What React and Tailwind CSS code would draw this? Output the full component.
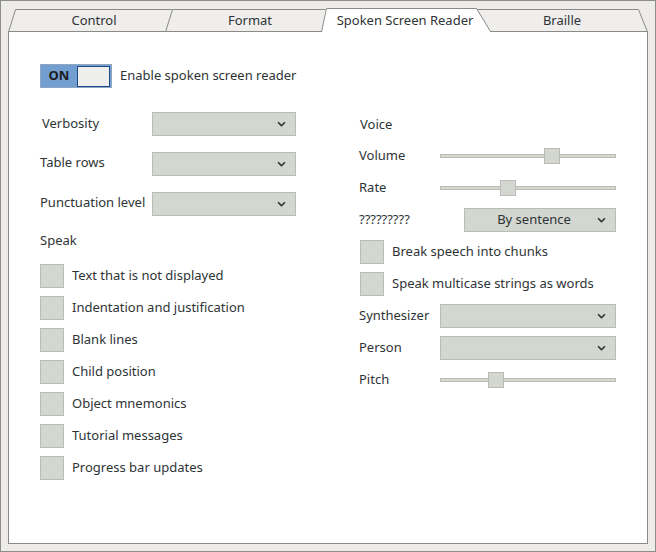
import React from 'react';

const font = { fontFamily: '"Noto Sans", "DejaVu Sans", sans-serif' };

function Chevron() {
  return (
    <svg width="9" height="6" viewBox="0 0 9 6" className="shrink-0">
      <path d="M1 1.2 L4.5 4.6 L8 1.2" fill="none" stroke="#2e3436" strokeWidth="1.6" />
    </svg>
  );
}

function Combo({ width, text }) {
  return (
    <div
      className={`${width} h-6 bg-[#d3d7cf] border border-[#babdb6] flex items-center pr-[9px]`}
    >
      <span className="flex-1 text-center pl-[6px] text-[13px] text-[#2e3436]">{text}</span>
      <Chevron />
    </div>
  );
}

function Checkbox({ label }) {
  return (
    <div className="h-6 flex items-center gap-2">
      <div className="w-6 h-6 bg-[#d3d7cf] border border-[#babdb6]" />
      <span className="text-[13px] text-[#2e3436]">{label}</span>
    </div>
  );
}

function Slider({ value }) {
  return (
    <div className="relative w-[176px] h-6 flex items-center">
      <div className="w-full h-[4px] bg-[#d3d7cf] border border-[#babdb6]" />
      <div
        className="absolute top-1 w-4 h-4 bg-[#d3d7cf] border border-[#babdb6]"
        style={{ left: Math.round(value * 160) }}
      />
    </div>
  );
}

function Tab({ width, z, pad, points, line, active, children }) {
  return (
    <div className={`relative ${width} ${z} h-6 flex items-center justify-center ${pad}`}>
      <svg className="absolute left-0 top-0 overflow-visible" width="10" height="24">
        <polygon points={points} fill={active ? '#ffffff' : '#efeeed'} />
        <polyline points={line} fill="none" stroke="#8a8a86" strokeWidth="1" />
      </svg>
      <span className="relative text-[13px] text-[#2e3436] pt-px">{children}</span>
    </div>
  );
}

export default function App() {
  return (
    <div style={font} className="w-[656px] h-[552px] bg-[#edeceb] border border-[#8d8d89] px-[7px] pt-[7px]">
      <div className="flex h-6">
        <Tab
          width="w-[157px]"
          z="z-0"
          pad="pl-[15px]"
          points="0,24 7,1 172,1 179,24"
          line="0.5,24 7.5,1.5 171.5,1.5"
        >
          Control
        </Tab>
        <Tab
          width="w-[156px]"
          z="z-[1]"
          pad="pl-[14px]"
          points="0,24 7,1 170,1 177,24"
          line="0.5,24 7.5,1.5 169.5,1.5"
        >
          Format
        </Tab>
        <Tab
          width="w-[170px]"
          z="z-[3]"
          pad="pr-[2px]"
          points="0,25 5,0 155,0 170,25"
          line="0.5,24 5.5,0.5 155.5,0.5 169.5,23.5"
          active
        >
          Spoken Screen Reader
        </Tab>
        <Tab
          width="w-[157px]"
          z="z-[2]"
          pad="pr-[15px]"
          points="-20,24 -14,1 148,1 157,24"
          line="-14,1.5 147.5,1.5 156.5,24"
        >
          Braille
        </Tab>
      </div>
      <div className="relative z-[2] -mt-px w-[640px] h-[513px] bg-white border border-[#8a8a86] pl-[31px] pt-[32px] text-[13px] text-[#2e3436]">
        <div className="flex items-center gap-2 h-6">
          <div className="w-[72px] h-6 bg-[#729fcf] border border-[#8ea6c2] flex items-center">
            <span className="w-[36px] text-center font-bold text-[13px] text-[#1c1c1c]">ON</span>
            <div className="w-[33px] h-[21px] bg-[#eeeeec] border border-[#204a87]" />
          </div>
          <span>Enable spoken screen reader</span>
        </div>

        <div className="flex mt-6">
          <div className="w-[320px] flex flex-col">
            <div className="flex items-center h-6">
              <span className="w-[112px] pl-[2px]">Verbosity</span>
              <Combo width="w-[144px]" />
            </div>
            <div className="flex items-center h-6 mt-4">
              <span className="w-[112px] pb-[2px]">Table rows</span>
              <Combo width="w-[144px]" />
            </div>
            <div className="flex items-center h-6 mt-4">
              <span className="w-[112px] pb-[2px]">Punctuation level</span>
              <Combo width="w-[144px]" />
            </div>
            <div className="h-[18px] mt-4 flex items-center">Speak</div>
            <div className="flex flex-col gap-2 mt-[14px]">
              <Checkbox label="Text that is not displayed" />
              <Checkbox label="Indentation and justification" />
              <Checkbox label="Blank lines" />
              <Checkbox label="Child position" />
              <Checkbox label="Object mnemonics" />
              <Checkbox label="Tutorial messages" />
              <Checkbox label="Progress bar updates" />
            </div>
          </div>

          <div className="flex flex-col gap-2">
            <div className="h-6 flex items-center pt-[2px]">Voice</div>
            <div className="h-6 flex items-center">
              <span className="w-[81px] -ml-px">Volume</span>
              <Slider value={0.65} />
            </div>
            <div className="h-6 flex items-center">
              <span className="w-[81px] -ml-px">Rate</span>
              <Slider value={0.375} />
            </div>
            <div className="h-6 flex items-center">
              <span className="w-[105px] -ml-px">?????????</span>
              <Combo width="w-[152px]" text="By sentence" />
            </div>
            <Checkbox label="Break speech into chunks" />
            <Checkbox label="Speak multicase strings as words" />
            <div className="h-6 flex items-center">
              <span className="w-[81px] -ml-px">Synthesizer</span>
              <Combo width="w-[176px]" />
            </div>
            <div className="h-6 flex items-center">
              <span className="w-[81px] -ml-px">Person</span>
              <Combo width="w-[176px]" />
            </div>
            <div className="h-6 flex items-center">
              <span className="w-[81px] -ml-px">Pitch</span>
              <Slider value={0.3} />
            </div>
          </div>
        </div>
      </div>
    </div>
  );
}
